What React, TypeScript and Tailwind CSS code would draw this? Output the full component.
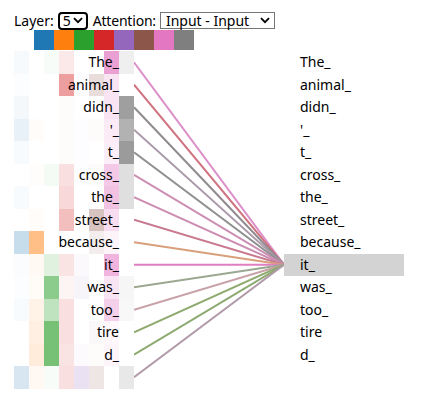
import { FC } from 'react'

const HEADS = ['#1f77b4', '#ff7f0e', '#2ca02c', '#d62728', '#9467bd', '#8c564b', '#e377c2', '#7f7f7f']

const TOKENS = ['The_', 'animal_', 'didn_', "'_", 't_', 'cross_', 'the_', 'street_', 'because_', 'it_', 'was_', 'too_', 'tire', 'd_', '']

// attention weight per head, one row per token
const WEIGHTS = [
  [0.04, 0, 0.03, 0.1, 0, 0, 0.7, 0.12],
  [0.01, 0, 0, 0.45, 0.02, 0.2, 0.2, 0],
  [0.05, 0, 0, 0.02, 0, 0, 0.2, 0.75],
  [0.1, 0.02, 0, 0.02, 0.02, 0.02, 0.15, 0.6],
  [0.03, 0, 0, 0.02, 0.02, 0, 0.12, 0.78],
  [0, 0.01, 0.05, 0.15, 0.02, 0.02, 0.4, 0.25],
  [0.03, 0, 0, 0.18, 0, 0, 0.45, 0.25],
  [0, 0.02, 0, 0.3, 0, 0.35, 0.25, 0],
  [0.25, 0.5, 0, 0, 0, 0.1, 0.08, 0],
  [0.02, 0.05, 0.15, 0.13, 0.04, 0, 0.55, 0],
  [0.01, 0.03, 0.55, 0.05, 0.07, 0, 0.2, 0.07],
  [0.03, 0.1, 0.3, 0.15, 0, 0, 0.35, 0.05],
  [0, 0.12, 0.65, 0.15, 0, 0.04, 0.05, 0],
  [0, 0.15, 0.65, 0.13, 0.03, 0.02, 0.08, 0],
  [0.18, 0.05, 0.03, 0.15, 0.2, 0.15, 0, 0.18],
]

const LINE_COLORS = [
  '#dc8fc8', '#d0727f', '#8f8b8f', '#aa9aa9', '#8f8f8f', '#cc8db2', '#cc8db2',
  '#c9798f', '#d99f7a', '#e07fc0', '#9aa890', '#c8a1a8', '#8fa96f', '#8ca96f', '#b199a9',
]

const ROW = 22.5
const TARGET = 9

const Chevron: FC = () => (
  <svg width="10" height="7" viewBox="0 0 10 7" className="shrink-0">
    <path d="M1 1.2 L5 5.2 L9 1.2" fill="none" stroke="black" strokeWidth="1.8" />
  </svg>
)

export default function App() {
  return (
    <div className="min-h-[403px] bg-white pl-[14px] pt-[11px] font-['Noto_Sans',sans-serif] text-[14px] text-black">
      <div className="flex h-[19px] items-center">
        <span className="leading-none">Layer:</span>
        <div className="ml-[4px] flex h-[18px] w-[30px] items-center justify-between rounded-[4px] border-2 border-black pl-[3px] pr-[3px]">
          <span className="leading-none">5</span>
          <Chevron />
        </div>
        <span className="ml-[5px] leading-none tracking-[-0.2px]">Attention:</span>
        <div className="ml-[4px] flex h-[17px] w-[115px] items-center justify-between border border-[#767676] pl-[5px] pr-[4px]">
          <span className="leading-none">Input - Input</span>
          <Chevron />
        </div>
      </div>

      <div className="ml-[20px] flex h-5">
        {HEADS.map((c) => (
          <div key={c} className="h-5 w-5" style={{ backgroundColor: c }} />
        ))}
      </div>

      <div className="mt-px flex">
        <div className="flex w-[120px] flex-col">
          {TOKENS.map((t, i) => (
            <div key={i} className="grid h-[22.5px] grid-cols-[repeat(8,15px)]">
              {WEIGHTS[i].map((w, h) => (
                <div
                  key={h}
                  className="row-start-1"
                  style={{ gridColumnStart: h + 1, backgroundColor: HEADS[h], opacity: w }}
                />
              ))}
              <span className="col-start-1 col-end-8 row-start-1 z-10 text-right leading-[22.5px]">{t}</span>
            </div>
          ))}
        </div>

        <svg width="150" height={ROW * 15} className="block">
          {TOKENS.map((_, i) => (
            <line
              key={i}
              x1="0"
              y1={ROW * i + ROW / 2}
              x2="150"
              y2={ROW * TARGET + ROW / 2}
              stroke={LINE_COLORS[i]}
              strokeWidth="2"
            />
          ))}
        </svg>

        <div className="flex w-[120px] flex-col">
          {TOKENS.slice(0, 14).map((t, i) => (
            <div
              key={i}
              className={`h-[22.5px] pl-4 leading-[22.5px] ${i === TARGET ? 'bg-[#d3d3d3]' : ''}`}
            >
              {t}
            </div>
          ))}
        </div>
      </div>
    </div>
  )
}
